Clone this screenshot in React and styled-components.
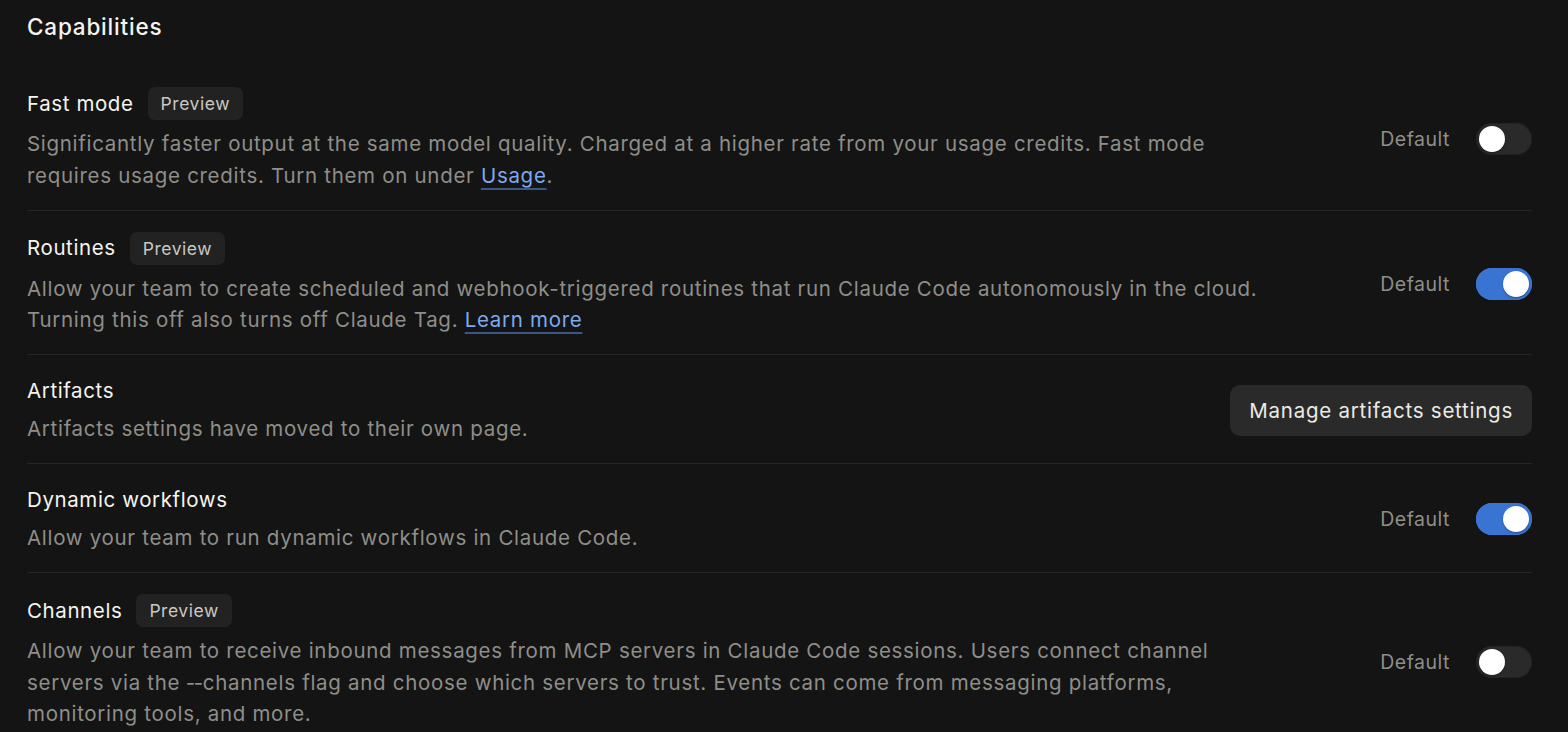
import React from 'react'
import styled, { createGlobalStyle } from 'styled-components'

const GlobalStyle = createGlobalStyle`
  html, body {
    margin: 0;
    padding: 0;
    background: #141414;
  }
  body {
    font-family: Inter, "Noto Sans", sans-serif;
    -webkit-font-smoothing: antialiased;
  }
`

const Page = styled.div`
  padding: 12px 36px 0 27px;
  color: #f5f4ef;
`

const Heading = styled.h2`
  margin: 0 0 24px;
  font-size: 22.5px;
  font-weight: 500;
  line-height: 30px;
  letter-spacing: 0.8px;
`

const Row = styled.div`
  display: flex;
  align-items: center;
  justify-content: space-between;
  gap: 40px;
  padding: 21px 0 18.5px;
  border-top: ${p => (p.$first ? 'none' : '1px solid #262626')};
`

const Info = styled.div`
  flex: 1;
  max-width: 1236px;
`

const TitleLine = styled.div`
  display: flex;
  align-items: center;
  gap: 14px;
  margin-bottom: ${p => (p.$badge ? '8px' : '7px')};
`

const Title = styled.span`
  font-size: 20.5px;
  line-height: 30px;
  letter-spacing: 0.6px;
  color: #f5f4ef;
`

const Badge = styled.span`
  display: inline-flex;
  align-items: center;
  height: 33px;
  padding: 0 13px;
  border-radius: 7px;
  background: #222222;
  color: #c9c8c2;
  font-size: 17.5px;
  letter-spacing: 0.55px;
`

const Desc = styled.p`
  margin: 0;
  font-size: 20.5px;
  line-height: 31.5px;
  letter-spacing: 0.7px;
  color: #8f8e89;
`

const Link = styled.a`
  color: #7ea9ef;
  text-decoration: underline;
  text-decoration-color: #3b5683;
  text-underline-offset: 5px;
  text-decoration-thickness: 1.5px;
`

const Control = styled.div`
  display: flex;
  align-items: center;
  gap: 26px;
  flex-shrink: 0;
`

const ControlLabel = styled.span`
  font-size: 19.5px;
  letter-spacing: 0.5px;
  color: #8f8e89;
`

const Track = styled.button`
  position: relative;
  width: 56px;
  height: 32px;
  padding: 0;
  border: none;
  border-radius: 16px;
  background: ${p => (p.$on ? '#3a74d2' : '#2a2a2a')};
  box-shadow: inset 0 0 0 1px ${p => (p.$on ? '#3a74d2' : '#232323')};
  cursor: pointer;
`

const Knob = styled.span`
  position: absolute;
  top: 3px;
  left: ${p => (p.$on ? '27px' : '3px')};
  width: 26px;
  height: 26px;
  border-radius: 50%;
  background: #ffffff;
  box-shadow: 0 1px 2px rgba(0, 0, 0, 0.35);
`

const ActionButton = styled.button`
  height: 51px;
  padding: 0 19px;
  border: none;
  border-radius: 10px;
  background: #2a2a2a;
  color: #ecebe6;
  font-family: inherit;
  font-size: 20.5px;
  letter-spacing: 0.75px;
  cursor: pointer;
`

function Toggle({ on }) {
  return (
    <Control>
      <ControlLabel>Default</ControlLabel>
      <Track $on={on} aria-pressed={on}>
        <Knob $on={on} />
      </Track>
    </Control>
  )
}

const rows = [
  {
    title: 'Fast mode',
    badge: true,
    desc: (
      <>
        Significantly faster output at the same model quality. Charged at a higher rate from your
        usage credits. Fast mode requires usage credits. Turn them on under <Link href="#">Usage</Link>.
      </>
    ),
    toggle: false,
  },
  {
    title: 'Routines',
    badge: true,
    desc: (
      <>
        Allow your team to create scheduled and webhook-triggered routines that run Claude Code
        autonomously in the cloud. Turning this off also turns off Claude Tag.{' '}
        <Link href="#">Learn more</Link>
      </>
    ),
    toggle: true,
  },
  {
    title: 'Artifacts',
    desc: 'Artifacts settings have moved to their own page.',
    button: 'Manage artifacts settings',
  },
  {
    title: 'Dynamic workflows',
    desc: 'Allow your team to run dynamic workflows in Claude Code.',
    toggle: true,
  },
  {
    title: 'Channels',
    badge: true,
    desc:
      'Allow your team to receive inbound messages from MCP servers in Claude Code sessions. Users connect channel servers via the \u2011\u2011channels flag and choose which servers to trust. Events can come from messaging platforms, monitoring tools, and more.',
    toggle: false,
  },
]

export default function App() {
  return (
    <>
      <GlobalStyle />
      <Page>
        <Heading>Capabilities</Heading>
        {rows.map((r, i) => (
          <Row key={r.title} $first={i === 0}>
            <Info>
              <TitleLine $badge={r.badge}>
                <Title>{r.title}</Title>
                {r.badge && <Badge>Preview</Badge>}
              </TitleLine>
              <Desc>{r.desc}</Desc>
            </Info>
            {r.button ? <ActionButton>{r.button}</ActionButton> : <Toggle on={r.toggle} />}
          </Row>
        ))}
      </Page>
    </>
  )
}
